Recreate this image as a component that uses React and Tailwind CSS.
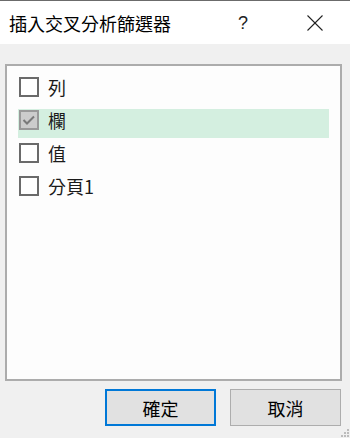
import React from "react";

const items = [
  { label: "列", checked: false },
  { label: "欄", checked: true },
  { label: "值", checked: false },
  { label: "分頁1", checked: false },
];

const Checkbox = ({ checked }) =>
  checked ? (
    <div className="w-[20px] h-[20px] mt-[1px] shrink-0 border-2 border-[#999999] bg-[#cccccc] flex items-center justify-center">
      <svg width="16" height="16" viewBox="0 0 16 16">
        <polyline points="2.5,8 6,11.5 13,4.5" fill="none" stroke="#7a7a7a" strokeWidth="2" />
      </svg>
    </div>
  ) : (
    <div className="w-[20px] h-[20px] mt-[1px] shrink-0 border-2 border-[#6a6a6a] bg-white"></div>
  );

export default function App() {
  return (
    <div className="w-[350px] h-[438px] bg-[#f0f0f0] border-t border-[#6b6b6b] flex flex-col font-['Noto_Sans_CJK_TC','Noto_Sans_CJK_SC',sans-serif] text-black">
      {/* title bar */}
      <div className="h-[43px] bg-white flex items-center shrink-0">
        <span className="pl-[9px] text-[18px] leading-none">插入交叉分析篩選器</span>
        <span className="ml-auto mr-[59px] text-[18px] leading-none font-['Liberation_Sans',sans-serif] text-[#222]">?</span>
        <svg width="16" height="16" viewBox="0 0 16 16" className="mr-[27px]">
          <line x1="0.5" y1="0.5" x2="15.5" y2="15.5" stroke="#222" strokeWidth="1.1" />
          <line x1="15.5" y1="0.5" x2="0.5" y2="15.5" stroke="#222" strokeWidth="1.1" />
        </svg>
      </div>

      {/* list box */}
      <div className="mt-[20px] ml-[5px] w-[337px] h-[317px] border-2 border-[#acacac] bg-[#fdfdfd] pt-[10px] px-[11px] flex flex-col gap-[4px]">
        {items.map((item) => (
          <div
            key={item.label}
            className={`h-[29px] flex items-start pl-[1px] ${item.checked ? "bg-[#d4efe0]" : ""}`}
          >
            <Checkbox checked={item.checked} />
            <span className="ml-[9px] mt-[1px] text-[18px] leading-[20px] text-[#1a1a1a]">
              {item.label}
            </span>
          </div>
        ))}
      </div>

      {/* buttons */}
      <div className="mt-[8px] flex justify-end pr-[9px] gap-[14px]">
        <button className="w-[111px] h-[37px] border-2 border-[#0078d7] bg-[#e1e1e1] text-[18px] leading-none">
          確定
        </button>
        <button className="w-[111px] h-[37px] border border-[#adadad] bg-[#e1e1e1] text-[18px] leading-none">
          取消
        </button>
      </div>

      {/* resize grip */}
      <div className="mt-auto self-end mr-[1px] mb-[1px] grid grid-cols-3 gap-[1px]">
        <span className="w-[2px] h-[2px]"></span>
        <span className="w-[2px] h-[2px]"></span>
        <span className="w-[2px] h-[2px] bg-[#bcbcbc]"></span>
        <span className="w-[2px] h-[2px]"></span>
        <span className="w-[2px] h-[2px] bg-[#bcbcbc]"></span>
        <span className="w-[2px] h-[2px] bg-[#bcbcbc]"></span>
        <span className="w-[2px] h-[2px] bg-[#bcbcbc]"></span>
        <span className="w-[2px] h-[2px] bg-[#bcbcbc]"></span>
        <span className="w-[2px] h-[2px] bg-[#bcbcbc]"></span>
      </div>
    </div>
  );
}
